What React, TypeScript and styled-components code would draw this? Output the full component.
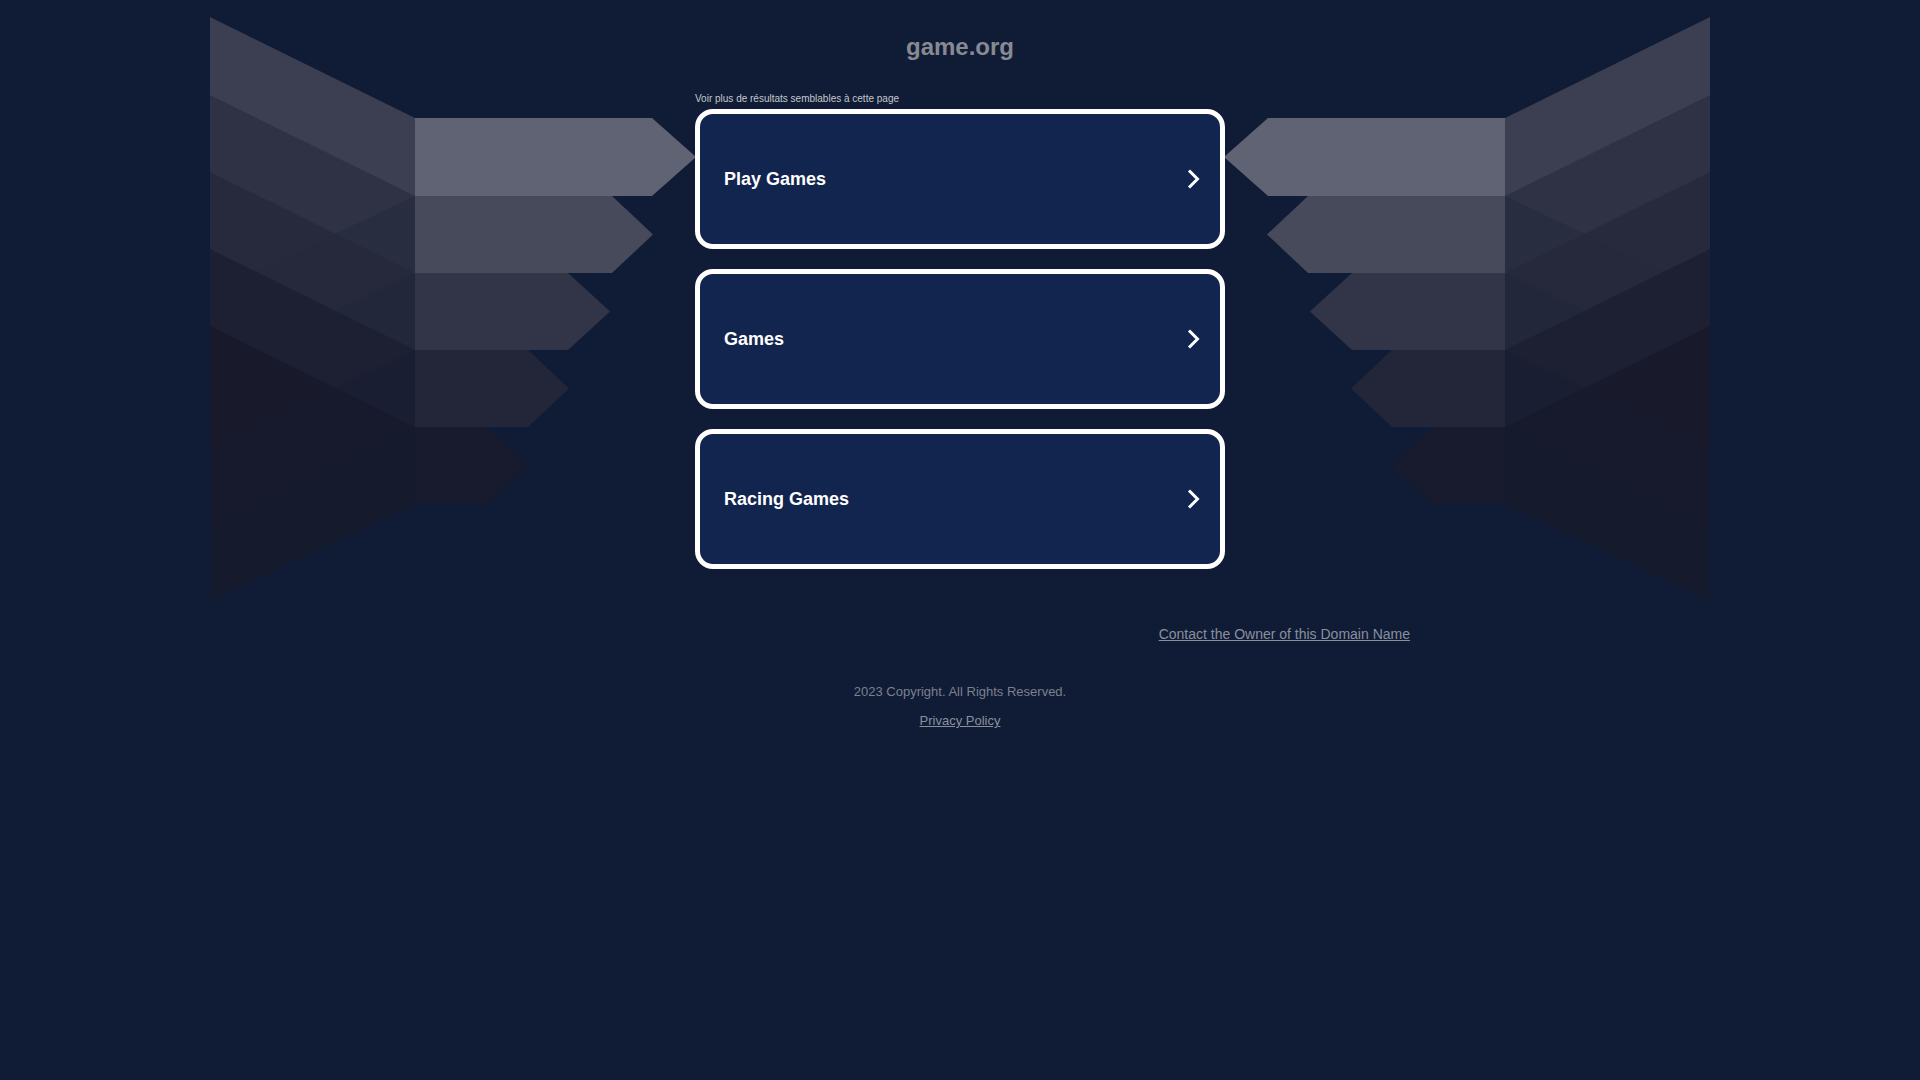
import React from "react";
import styled, { createGlobalStyle } from "styled-components";

const GlobalStyle = createGlobalStyle`
  html, body {
    margin: 0;
    padding: 0;
    background: #101c36;
  }
  body {
    font-family: "Liberation Sans", Arial, Helvetica, sans-serif;
  }
`;

const Page = styled.div`
  position: relative;
  min-height: 100vh;
  overflow: hidden;
`;

const Backdrop = styled.svg`
  position: absolute;
  top: 0;
  left: 50%;
  margin-left: -960px;
  width: 1920px;
  height: 640px;
  pointer-events: none;
  z-index: 0;
`;

const Content = styled.main`
  position: relative;
  z-index: 1;
  width: 530px;
  margin: 0 auto;
  padding-top: 33px;
  display: flex;
  flex-direction: column;
`;

const Title = styled.h1`
  margin: 0;
  font-size: 24px;
  font-weight: 700;
  line-height: 27.6px;
  color: #878a92;
  text-align: center;
`;

const Label = styled.p`
  margin: 32px 0 0;
  font-size: 10px;
  line-height: 11.5px;
  color: #c4c7cd;
`;

const CardList = styled.div`
  margin-top: 5px;
  display: flex;
  flex-direction: column;
  gap: 20px;
`;

const Card = styled.a`
  box-sizing: border-box;
  height: 140px;
  display: flex;
  align-items: center;
  justify-content: space-between;
  padding: 0 20px 0 24px;
  background: #12254f;
  border: 5px solid #ffffff;
  border-radius: 18px;
  text-decoration: none;
  color: #ffffff;
  cursor: pointer;
`;

const CardText = styled.span`
  font-size: 18px;
  font-weight: 700;
  color: #ffffff;
`;

const Chevron = styled.svg`
  width: 14px;
  height: 22px;
  flex: none;
`;

const Footer = styled.footer`
  position: relative;
  z-index: 1;
  width: 900px;
  margin: 0 auto;
  display: flex;
  flex-direction: column;
`;

const ContactRow = styled.div`
  margin-top: 57px;
  text-align: right;
  font-size: 14px;
  line-height: 16px;
`;

const FooterLink = styled.a<{ $size: number }>`
  color: #8a8f9c;
  font-size: ${(p) => p.$size}px;
  text-decoration: underline;
`;

const Copyright = styled.p`
  margin: 42px 0 0;
  text-align: center;
  font-size: 13px;
  line-height: 15px;
  color: #7b8090;
`;

const PrivacyRow = styled.div`
  margin-top: 14px;
  text-align: center;
  font-size: 13px;
  line-height: 15px;
`;

type Band = {
  top: number;
  bot: number;
  flat: number;
  tip: number;
  left: string;
  right: string;
};

const bands: Band[] = [
  { top: 118, bot: 196, flat: 652, tip: 696, left: "#444556", right: "#606373" },
  { top: 196, bot: 273, flat: 612, tip: 653, left: "#2d3042", right: "#474a5b" },
  { top: 273, bot: 350, flat: 568, tip: 610, left: "#26293b", right: "#323547" },
  { top: 350, bot: 427, flat: 528, tip: 569, left: "#1c1f31", right: "#232638" },
  { top: 427, bot: 504, flat: 487, tip: 528, left: "#171a2b", right: "#171b2d" },
];

const Wing: React.FC = () => (
  <g>
    {bands.map((b, i) => (
      <polygon
        key={`a${i}`}
        fill={b.right}
        points={`415,${b.top} ${b.flat},${b.top} ${b.tip},${(b.top + b.bot) / 2} ${b.flat},${b.bot} 415,${b.bot}`}
      />
    ))}
    {bands.map((b, i) => (
      <polygon
        key={`t${i}`}
        fill={b.left}
        fillOpacity={0.85}
        points={`210,${b.top - 101} 415,${b.top} 415,${b.bot} 210,${b.bot + 97}`}
      />
    ))}
  </g>
);

const items = ["Play Games", "Games", "Racing Games"];

export default function App() {
  return (
    <>
      <GlobalStyle />
      <Page>
        <Backdrop viewBox="0 0 1920 640" aria-hidden="true">
          <Wing />
          <g transform="matrix(-1 0 0 1 1920 0)">
            <Wing />
          </g>
        </Backdrop>
        <Content>
          <Title>game.org</Title>
          <Label>Voir plus de résultats semblables à cette page</Label>
          <CardList>
            {items.map((t) => (
              <Card key={t} href="#">
                <CardText>{t}</CardText>
                <Chevron viewBox="0 0 14 22">
                  <polyline
                    points="3,2.5 11.5,11 3,19.5"
                    fill="none"
                    stroke="#ffffff"
                    strokeWidth={3}
                  />
                </Chevron>
              </Card>
            ))}
          </CardList>
        </Content>
        <Footer>
          <ContactRow>
            <FooterLink $size={14} href="#">
              Contact the Owner of this Domain Name
            </FooterLink>
          </ContactRow>
          <Copyright>2023 Copyright. All Rights Reserved.</Copyright>
          <PrivacyRow>
            <FooterLink $size={13} href="#">
              Privacy Policy
            </FooterLink>
          </PrivacyRow>
        </Footer>
      </Page>
    </>
  );
}
